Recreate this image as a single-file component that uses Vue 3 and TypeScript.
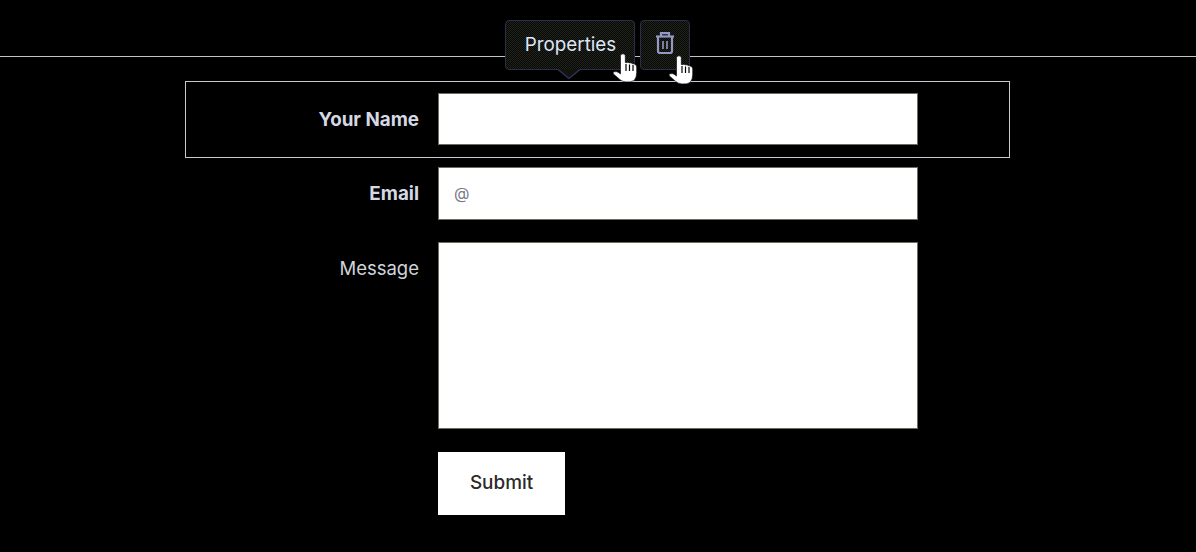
<script setup lang="ts">
const fields = [
  { label: 'Your Name', bold: true, selected: true, placeholder: '' },
  { label: 'Email', bold: true, selected: false, placeholder: '@' },
]
</script>

<template>
  <div class="page">
    <div class="topbar"></div>
    <form class="form" @submit.prevent>
      <div
        v-for="f in fields"
        :key="f.label"
        class="row"
        :class="{ selected: f.selected }"
      >
        <label class="label bold">{{ f.label }}</label>
        <div class="input">
          <span v-if="f.placeholder" class="placeholder">{{ f.placeholder }}</span>
        </div>
      </div>
      <div class="row message">
        <label class="label">Message</label>
        <div class="input area"></div>
      </div>
      <div class="row action">
        <span></span>
        <button class="submit" type="button">Submit</button>
      </div>
    </form>

    <div class="toolbar">
      <div class="tool props">Properties</div>
      <div class="tool trash">
        <svg class="trash-icon" width="20" height="24" viewBox="0 0 20 24" fill="none" stroke="#9498c4" stroke-width="2.200">
          <path d="M1 5.500h18" />
          <path d="M6 5V2.200h8V5" />
          <path d="M3 5.500V20a2 2 0 0 0 2 2h10a2 2 0 0 0 2-2V5.500" />
          <path d="M8 10v8M12 10v8" stroke-width="1.600" />
        </svg>
      </div>
      <svg class="arrow" width="24" height="11" viewBox="0 0 24 11">
        <path d="M1 0h22v1L12 10 1 1z" fill="#12140c" />
        <path d="M1 .5L12 9.500 23 .5" fill="none" stroke="#2f3566" stroke-width="1.200" />
      </svg>
    </div>

    <svg v-for="c in ['c1', 'c2']" :key="c" class="cursor" :class="c" width="26" height="31" viewBox="0 0 26 31">
      <path
        d="M7.500 2q2.500-2.500 4.800 0v7.500l1 .2q1.700-1 3.200.2 1.600-.5 3 .8 1.700-.2 3.200 1.200 1 .7 1 2v6q0 4.500-2.500 7.500-3 2-8.500 1.500-4-.5-6-2.500L.5 21q-1-1.500.5-2.200 2.500-.7 4.500.7l2 1.500V3.500q0-1 0-1.500z"
        fill="#fff"
        stroke="#000"
        stroke-width=".6"
      />
      <path d="M13 11v7M16.500 11.500v6.500M20 12v6" stroke="#000" stroke-width="1.200" />
    </svg>
  </div>
</template>

<style>
html,
body {
  margin: 0;
  background: #000;
}
</style>

<style scoped>
.page {
  position: relative;
  width: 1196px;
  height: 552px;
  overflow: hidden;
  background: #000;
  font-family: Inter, "Liberation Sans", sans-serif;
}
.topbar {
  height: 56px;
  border-bottom: 1px solid #c4c4c4;
}
.form {
  width: 825px;
  margin: 24px 0 0 185px;
  display: flex;
  flex-direction: column;
}
.row {
  display: grid;
  grid-template-columns: 233px 480px;
  column-gap: 19px;
  box-sizing: border-box;
  padding: 0 1px;
}
.row.selected {
  height: 77px;
  margin-bottom: 9px;
  padding: 12px 1px;
  outline: 1px solid #c8c8d0;
  outline-offset: -1px;
}
.row.message {
  margin-top: 22px;
}
.row.action {
  margin-top: 23px;
}
.label {
  height: 52px;
  text-align: right;
  color: #d0d4dc;
  font-size: 18.500px;
  line-height: 52px;
}
.label.bold {
  font-size: 18.800px;
  font-weight: 700;
  color: #d4d9e4;
  line-height: 54px;
}
.input {
  box-sizing: border-box;
  height: 52px;
  background: #fff;
  border: 1px solid #6b6d60;
  display: flex;
  align-items: center;
  padding: 0 0 2px 15px;
}
.selected + .row .input {
  height: 53px;
}
.area {
  height: 187px;
}
.placeholder {
  color: #7a7a88;
  font-size: 16px;
}
.submit {
  width: 127px;
  height: 63px;
  border: 0;
  padding: 0 0 2px;
  background: #fff;
  color: #2a2a2a;
  font: 500 18.900px Inter, "Liberation Sans", sans-serif;
}
.toolbar {
  position: absolute;
  left: 505px;
  top: 20px;
  display: flex;
  gap: 5px;
}
.tool {
  box-sizing: border-box;
  height: 50px;
  background: repeating-conic-gradient(#20231a 0 25%, #080808 0 50%) 0 0 / 2px 2px;
  border: 1px solid #2a2e48;
  border-radius: 4px;
  display: flex;
  align-items: center;
  justify-content: center;
}
.props {
  width: 130px;
  padding: 0 0 2px 1px;
  color: #dfe6f8;
  font-size: 18.800px;
}
.trash {
  width: 50px;
}
.trash-icon {
  margin-bottom: 5px;
}
.arrow {
  position: absolute;
  left: 52px;
  top: 49px;
}
.cursor {
  position: absolute;
}
.c1 {
  left: 613px;
  top: 53px;
}
.c2 {
  left: 669px;
  top: 55px;
}
</style>
